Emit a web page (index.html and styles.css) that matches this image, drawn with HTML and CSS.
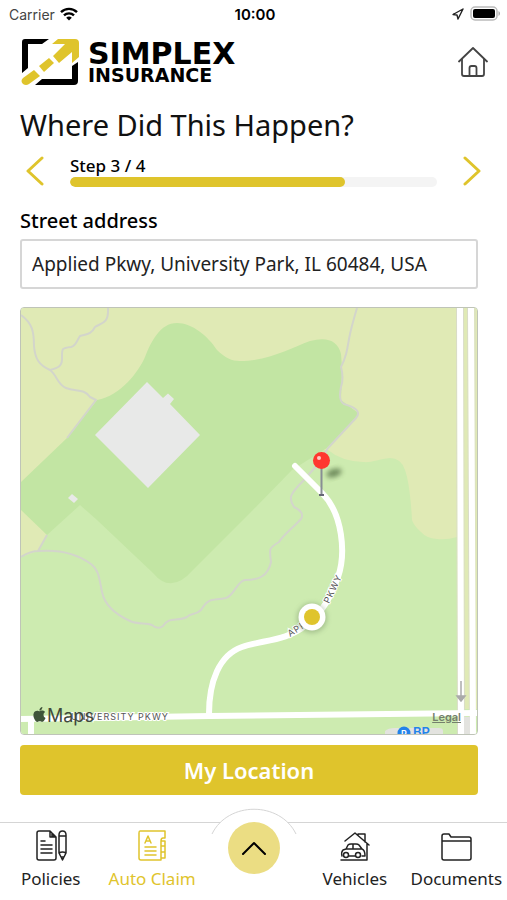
FILE: index.html
```
<!DOCTYPE html>
<html lang="en">
<head>
    <meta charset="UTF-8">
    <meta name="viewport" content="width=device-width, initial-scale=1.0">
    <title>Simplex Insurance - Auto Claim</title>
    <link rel="stylesheet" href="styles.css">
</head>
<body>
    <div class="status-bar">
        <div class="carrier">
            <span>Carrier</span>
            <svg width="18" height="14" viewBox="0 0 18 14" fill="none" stroke="#000" stroke-width="2.4">
                <path d="M1 5.2C5.500 .8 12.500 .8 17 5.200"/>
                <path d="M4 8.400c2.800-2.700 7.200-2.700 10 0"/>
                <path d="M9 13.500L6.200 10.700c1.600-1.500 4-1.500 5.600 0z" fill="#000" stroke="none"/>
            </svg>
        </div>
        <span class="clock">10:00</span>
        <div class="battery">
            <svg width="12" height="12" viewBox="0 0 12 12" fill="none" stroke="#222" stroke-width="1.4" stroke-linejoin="round">
                <path d="M11 1L1 6.500l4 .5L6 11z"/>
            </svg>
            <svg width="31" height="16" viewBox="0 0 31 16">
                <rect x="1" y="1" width="26" height="13" rx="4" fill="#fff" stroke="#bbb" stroke-width="1.500"/>
                <rect x="3" y="3" width="22" height="9" rx="2"/>
                <path d="M28.500 5v5c2-1 2-4 0-5z" fill="#aaa"/>
            </svg>
        </div>
    </div>

    <header class="header">
        <a class="logo" href="#">
            <svg width="59" height="48" viewBox="0 0 59 48">
                <path d="M1 35V4q0-3 3-3H28L21 6H7V30z"/>
                <path d="M57 24V43q0 4-4 4H14l7-6H51V28z"/>
                <g fill="#dfc42c">
                    <path d="M37 1H54q4 0 4 4V19l-7 6V14L38 25l-6-7L44 6H31z"/>
                    <path d="M18 28l10-8 5 5-10 9z"/>
                    <path d="M13 32l6 6L8 46q-3 2-6 0-3-3 0-6z"/>
                </g>
            </svg>
            <span class="logo-text">
                <span class="logo-name">SIMPLEX</span>
                <span class="logo-sub">INSURANCE</span>
            </span>
        </a>
        <a class="home" href="#" aria-label="Home">
            <svg width="30" height="30" viewBox="0 0 30 30" fill="none" stroke="#444" stroke-width="1.800" stroke-linecap="round" stroke-linejoin="round">
                <path d="M1 14.500L15 1l14 13.500"/>
                <path d="M4 12v15q0 2 2 2h18q2 0 2-2V12"/>
                <path d="M11.500 29V21q0-2 2-2h3q2 0 2 2v8"/>
            </svg>
        </a>
    </header>

    <h1>Where Did This Happen?</h1>

    <div class="stepper">
        <button class="arrow" type="button" aria-label="Previous step">
            <svg width="18" height="30" viewBox="0 0 18 30"><path d="M16 2L2 15l14 13"/></svg>
        </button>
        <div class="step">
            <label for="step-progress">Step 3 / 4</label>
            <progress id="step-progress" value="3" max="4"></progress>
        </div>
        <button class="arrow" type="button" aria-label="Next step">
            <svg width="18" height="30" viewBox="0 0 18 30"><path d="M2 2l14 13L2 28"/></svg>
        </button>
    </div>

    <form class="location-form">
        <label class="field-label" for="address">Street address</label>
        <input type="text" id="address" name="address" value="Applied Pkwy, University Park, IL 60484, USA">

        <div class="map">
            <svg class="map-svg" viewBox="0 0 456 426" preserveAspectRatio="xMidYMid slice">
                <defs>
                    <filter id="blur" x="-50%" y="-50%" width="200%" height="200%"><feGaussianBlur stdDeviation="2.500"/></filter>
                </defs>
                <!-- land -->
                <rect width="456" height="426" fill="#cdebb0"/>
                <path fill="#e0eab5" d="M0 0H456V401H436V229Q426 232 416 231Q405 230 400 224Q393 218 391 212Q389 176 384 162Q380 150 369 150C358 151 350 155 342 154Q320 153 307 142L150 150L0 202Z"/>
                <path fill="#e0eab5" d="M0 195L26 227L17 243L0 249Z"/>
                <path fill="#c2e5a3" d="M0 174L46 130L76 92C100 88 118 63 124 49C130 34 139 15 156 15C171 15 187 28 196 42C204 50 211 53 219 53C247 53 270 40 289 33Q315 26 320 46L321 59L320 92Q325 96 336 104V109L306 140L271 162L229 205L172 262Q150 287 132 265L76 212L59 197L26 227L0 202Z"/>
                <!-- buildings -->
                <path fill="#e8e9e8" d="M126 74L142 90L147 85.500L153 91L149 96L179 127L127 180L74 127Z"/>
                <path fill="#e8e9e8" d="M51 186l6 5-4 4-6-5z"/>
                <!-- trails -->
                <g class="trail">
                    <path d="M0 7C11 15 13 23 13 38C14 51 18 57 29 62C36 67 36 76 45 80C54 84 63 80 69 89L75 92L46 130"/>
                    <path d="M87 0C88 17 79 15 74 19C70 27 65 26 59 28C55 34 55 38 50 39C40 40 41 41 41 51C41 59 36 60 29 62"/>
                    <path d="M336 0C333 10 330 20 328 31C326 43 325 49 320 59Q323 70 320 79Q317 93 323 96C333 99 341 103 335 110L307 140L298 155L282 173C269 186 267 190 273 199Q284 204 280 211C271 221 264 225 258 234C248 240 248 240 250 254C247 268 238 272 224 272C216 273 213 288 205 290C191 293 188 289 180 302C174 308 170 304 166 309C156 314 148 308 142 318Q137 322 131 317C125 314 117 317 109 313C98 308 84 299 81 284C78 268 77 261 70 256C51 242 31 242 18 243Q9 243 0 249"/>
                    <path d="M26 227L17 243"/>
                </g>
                <!-- roads -->
                <path d="M435.500 0L436.500 426M442.500 0L443.500 426M446.500 0L448.500 426M454 0V426" fill="none" stroke="#d9dcc8"/>
                <g class="road">
                    <path d="M439 0L440 426"/>
                    <path d="M450 0L452 426"/>
                    <path d="M274 158L301 185C322 206 325 246 317 269C310 288 303 303 285 317C266 333 241 332 221 339C198 347 188 374 188 406"/>
                    <path d="M0 411L189 408L456 405"/>
                    <path d="M10 411V426"/>
                </g>
                <path fill="#e3e3df" d="M443 409h6v17h-6zM364 423q3-3 10-3h44q4 0 4 3v3H364z"/>
                <path d="M440 373V389M436 388H444L440 393Z" fill="#aaa" stroke="#aaa" stroke-width="1.500"/>
                <!-- labels -->
                <text class="road-label" x="50" y="412">UNIVERSITY PKWY</text>
                <text class="road-label" transform="translate(269 329) rotate(-32)">APPL</text>
                <text class="road-label" transform="translate(308 296) rotate(-64)">PKWY</text>
                <circle cx="383" cy="425" r="6.500" fill="#2383ea"/>
                <text x="380" y="429" class="parking">P</text>
                <text x="392" y="429" class="poi">BP</text>
                <path transform="translate(11 399) scale(.62)" fill="#3f5439" d="M12.152 6.896c-.948 0-2.415-1.078-3.960-1.040-2.040.027-3.910 1.183-4.961 3.014-2.117 3.675-.546 9.103 1.519 12.090 1.013 1.454 2.208 3.090 3.792 3.039 1.520-.065 2.090-.987 3.935-.987 1.831 0 2.350.987 3.960.948 1.637-.026 2.676-1.480 3.676-2.948 1.156-1.688 1.636-3.325 1.662-3.415-.039-.013-3.182-1.221-3.220-4.857-.026-3.040 2.480-4.494 2.597-4.559-1.429-2.090-3.623-2.324-4.390-2.376-2-.156-3.675 1.090-4.610 1.090zM15.530 3.830c.843-1.012 1.400-2.427 1.245-3.830-1.207.052-2.662.805-3.532 1.818-.780.896-1.454 2.338-1.273 3.714 1.338.104 2.715-.688 3.559-1.701"/>
                <text class="maps-name" x="26" y="414">Maps</text>
                <!-- current location -->
                <circle cx="291" cy="310" r="15" fill="#68805a" opacity=".4" filter="url(#blur)"/>
                <circle cx="291" cy="309" r="13.500" fill="#fff"/>
                <circle cx="291" cy="309" r="8" fill="#dfc42c"/>
                <!-- pin -->
                <ellipse cx="313" cy="165" rx="8" ry="4" transform="rotate(-18 313 165)" fill="#334d28" opacity=".6" filter="url(#blur)"/>
                <path d="M300.500 158V187" stroke="#888e94" stroke-width="2"/>
                <path d="M298 187h5" stroke="#667" stroke-width="2"/>
                <circle cx="300.500" cy="152.500" r="8.500" fill="#ff3830"/>
                <circle cx="298" cy="150" r="2" fill="#ffc9c4"/>
            </svg>
            <a class="legal" href="#">Legal</a>
        </div>

        <button class="my-location" type="button">My Location</button>
    </form>

    <nav class="tab-bar">
        <a class="tab" href="#">
            <svg width="32" height="32" viewBox="0 0 32 32">
                <path d="M15 1H4Q2 1 2 3v25q0 2 2 2h15q2 0 2-2V7L15 1v6h6M17 3v3h2"/>
                <path d="M6 11h4M6 15h11M6 19h11M6 23h11"/>
                <path d="M24 5q0-4 3.500-4T31 5v18l-3.500 7L24 23zM24 6h7M24 23q3.500-2 7 0M26 27h3"/>
            </svg>
            <span>Policies</span>
        </a>
        <a class="tab active" href="#">
            <svg width="32" height="32" viewBox="0 0 32 32">
                <path d="M29 8V1H4Q3 1 3 3v25q0 2 2 2h20V11q0-3 2-3h2M25 11h4v5h-3 3v6h-3 3v6h-4"/>
                <path d="M9 13l3-7 3 7M10 11h4M9 17h11M9 21h11M9 25h11"/>
            </svg>
            <span>Auto Claim</span>
        </a>
        <div class="tab-center">
            <svg class="arc" width="86" height="28" viewBox="0 0 86 28">
                <path d="M1 26C17-7 69-7 85 26" />
            </svg>
            <button class="menu-button" type="button" aria-label="Open menu">
                <svg width="26" height="14" viewBox="0 0 26 14"><path d="M2 13L13 2l11 11"/></svg>
            </button>
        </div>
        <a class="tab" href="#">
            <svg width="32" height="32" viewBox="0 0 32 32">
                <path d="M6 11L16 3l14 12M19 5V4h7v8M28 14v16H2"/>
                <path d="M3 26q-1-4 1-6l3-1 2-4q1-1 3-1h5q2 0 3 1l3 4q3 1 3 7h-3M10 26h6M7 19h16M14 14v5"/>
                <circle cx="7" cy="25" r="2.500"/><circle cx="19" cy="25" r="2.500"/>
            </svg>
            <span>Vehicles</span>
        </a>
        <a class="tab" href="#">
            <svg width="32" height="32" viewBox="0 0 32 32">
                <path d="M2 11V6q0-2 2-2h5l2 3h18q2 0 2 2v19q0 2-2 2H4q-2 0-2-2V11h29"/>
            </svg>
            <span>Documents</span>
        </a>
    </nav>
</body>
</html>
```
FILE: styles.css
```
* {
    box-sizing: border-box;
}
body {
    margin: 0;
    min-height: 100vh;
    display: flex;
    flex-direction: column;
    background-color: #fff;
    color: #111;
    font-family: "Noto Sans", "Open Sans", sans-serif;
}
a {
    color: inherit;
    text-decoration: none;
}
button {
    border: none;
    padding: 0;
    background: none;
    font-family: inherit;
    cursor: pointer;
}
svg {
    display: block;
}

/* status bar */
.status-bar {
    display: grid;
    grid-template-columns: 1fr auto 1fr;
    align-items: center;
    height: 28px;
    padding: 0 6px 0 9px;
    font-family: Inter, sans-serif;
    font-size: 15px;
}
.carrier {
    display: flex;
    align-items: center;
    gap: 5px;
    font-size: 14px;
    color: #444;
}
.clock {
    font-weight: 600;
    color: #000;
}
.battery {
    display: flex;
    align-items: center;
    justify-content: flex-end;
    gap: 6px;
}

/* header */
.header {
    display: flex;
    justify-content: space-between;
    align-items: center;
    padding: 10px 19px 0 21px;
}
.logo {
    display: flex;
    align-items: center;
    gap: 8px;
}
.logo-text {
    display: flex;
    flex-direction: column;
    font-family: "DejaVu Sans", sans-serif;
    font-weight: bold;
    color: #000;
}
.logo-name {
    margin-top: 2px;
    font-size: 30px;
    line-height: 24px;
}
.logo-sub {
    font-size: 19px;
    line-height: 18px;
}
h1 {
    margin: 17px 20px 0;
    font-size: 29px;
    line-height: 44px;
    font-weight: 400;
}

/* steps */
.stepper {
    display: flex;
    align-items: center;
    gap: 26px;
    margin-top: 8px;
    padding: 0 26px;
}
.arrow svg {
    fill: none;
    stroke: #dfc42c;
    stroke-width: 3;
    stroke-linecap: round;
    stroke-linejoin: round;
}
.step {
    flex: 1;
    display: flex;
    flex-direction: column;
    font-size: 17px;
    line-height: 22px;
    font-weight: 500;
    color: #000;
}
progress {
    appearance: none;
    display: block;
    width: 100%;
    height: 10px;
    border: none;
}
progress::-webkit-progress-bar {
    background-color: #f4f4f4;
    border-radius: 5px;
    overflow: hidden;
}
progress::-webkit-progress-value {
    background-color: #dfc42c;
    border-radius: 5px;
}

/* form */
.location-form {
    display: flex;
    flex-direction: column;
    padding: 20px 29px 0 20px;
}
.field-label {
    font-size: 20px;
    line-height: 28px;
    font-weight: 500;
    color: #000;
}
input[type="text"] {
    width: 100%;
    height: 50px;
    margin-top: 4px;
    padding: 0 10px;
    border: 2px solid #d6d6d6;
    border-radius: 3px;
    font-family: inherit;
    font-size: 19px;
    color: #222;
}
.map {
    position: relative;
    margin-top: 18px;
    border: 1px solid #bfc4b8;
    border-radius: 4px;
    overflow: hidden;
}
.map-svg {
    width: 100%;
    height: auto;
}
.trail path {
    fill: none;
    stroke: #d3d5cb;
    stroke-width: 2;
    stroke-linejoin: round;
}
.road path {
    fill: none;
    stroke: #fff;
    stroke-width: 6;
    stroke-linecap: round;
}
.road-label {
    font-family: Inter, sans-serif;
    font-size: 9px;
    letter-spacing: 1px;
    fill: #555;
    stroke: #fff;
    stroke-width: 2px;
    paint-order: stroke;
}
.parking,
.poi {
    font-family: Inter, sans-serif;
    font-weight: 600;
}
.parking {
    font-size: 9px;
    fill: #fff;
}
.poi {
    font-size: 13px;
    fill: #2383ea;
}
.maps-name {
    font-family: Inter, sans-serif;
    font-size: 18px;
    fill: #3f4a3c;
}
.legal {
    position: absolute;
    right: 16px;
    bottom: 10px;
    font-family: Inter, sans-serif;
    font-size: 11px;
    line-height: 14px;
    font-weight: 600;
    text-decoration: underline;
    color: #74806c;
}
.my-location {
    height: 50px;
    margin-top: 10px;
    border-radius: 4px;
    background-color: #dfc42c;
    color: #fff;
    font-size: 22px;
    font-weight: 600;
}

/* bottom tabs */
.tab-bar {
    display: flex;
    margin-top: auto;
    height: 78px;
    border-top: 1px solid #d5d5d5;
}
.tab {
    flex: 1 0 0;
    display: flex;
    flex-direction: column;
    align-items: center;
    padding-top: 7px;
    font-size: 17px;
    line-height: 24px;
    color: #222;
}
.tab span {
    margin-top: 5px;
}
.tab svg {
    fill: none;
    stroke: currentColor;
    stroke-width: 1.500;
    stroke-linecap: round;
    stroke-linejoin: round;
}
.tab.active {
    color: #dfc42c;
}
.tab-center {
    position: relative;
    flex: 1 0 0;
    display: flex;
    justify-content: center;
    align-items: flex-start;
}
.arc {
    position: absolute;
    top: -15px;
    fill: #fff;
    stroke: #d5d5d5;
}
.menu-button {
    position: absolute;
    top: -1px;
    display: flex;
    justify-content: center;
    align-items: center;
    width: 52px;
    height: 52px;
    border-radius: 50%;
    background-color: #ebdd83;
}
.menu-button svg {
    fill: none;
    stroke: #000;
    stroke-width: 2;
    stroke-linecap: round;
    stroke-linejoin: round;
}
```
